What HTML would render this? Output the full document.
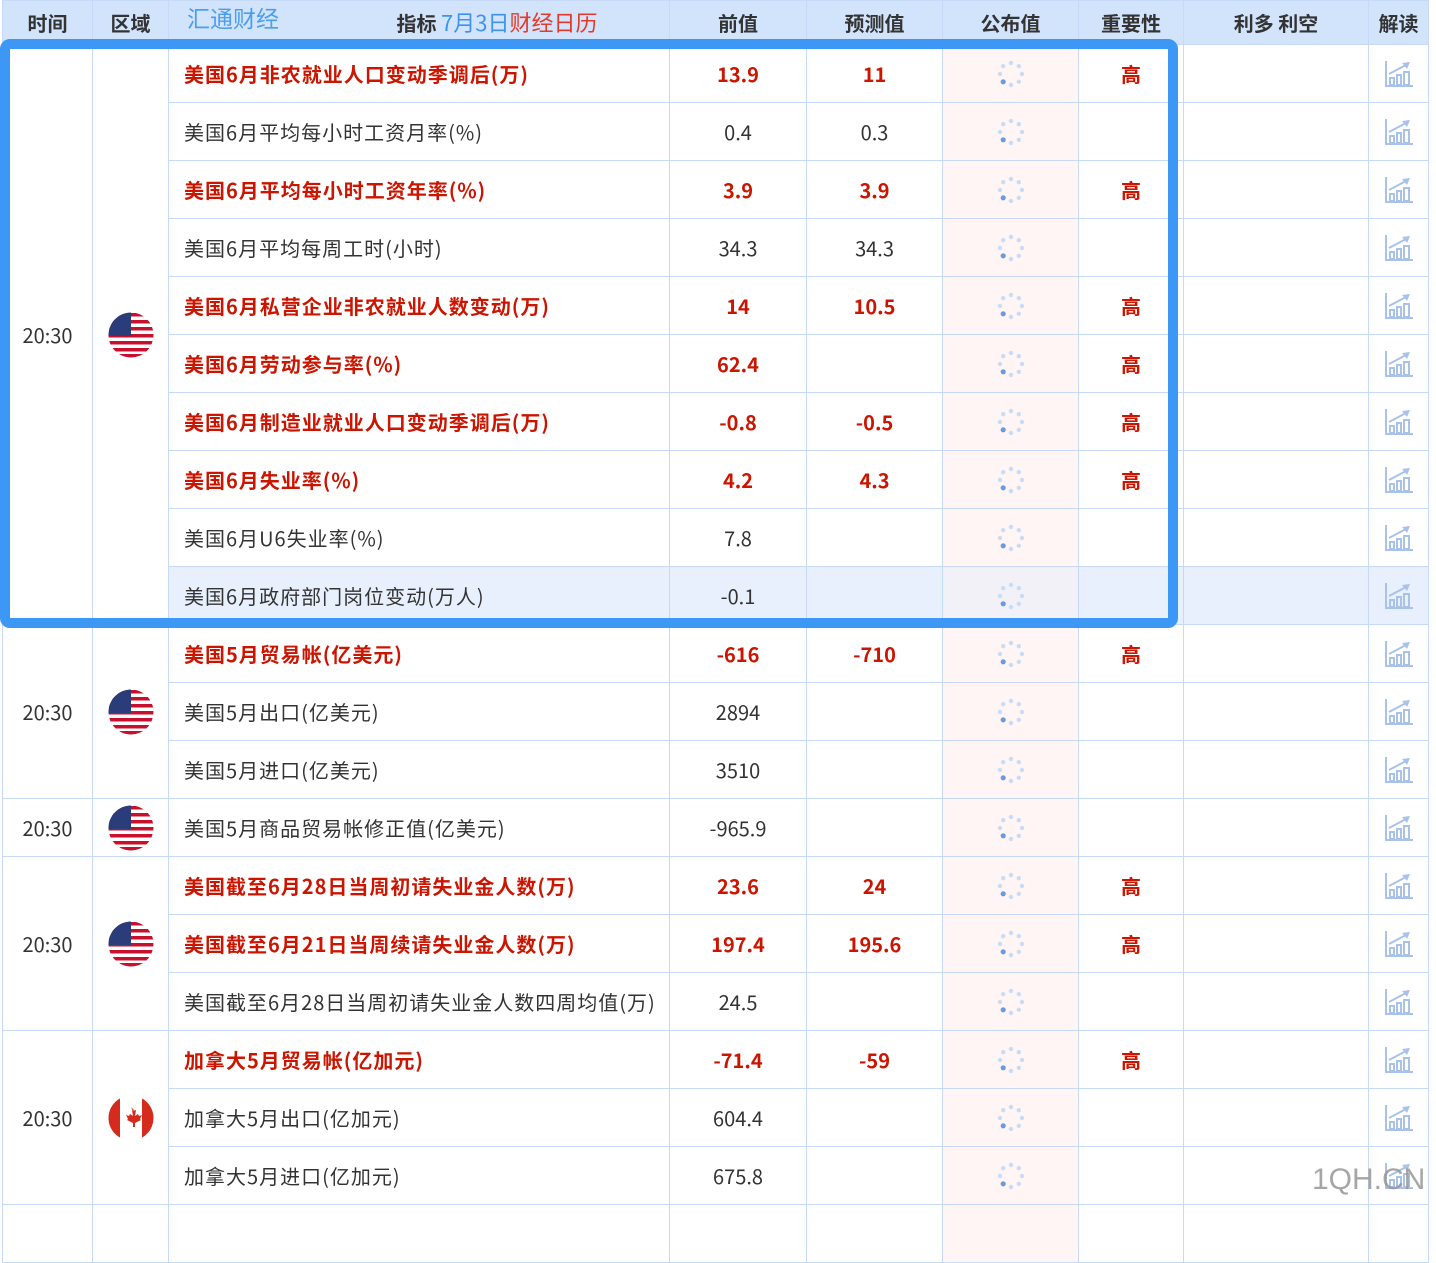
<!DOCTYPE html>
<html><head><meta charset="utf-8">
<style>
body{margin:0;background:#fff;width:1436px;height:1218px;overflow:hidden;position:relative;font-family:"Noto Sans CJK SC","Liberation Sans",sans-serif;}
table{position:absolute;left:2px;top:0;border-collapse:collapse;table-layout:fixed;width:1426px;}
td,th{border:1px solid #c6d9f6;padding:0;font-size:20px;line-height:24px;color:#333;text-align:center;}
th{height:43px;background:#d2e3fc;font-weight:bold;color:#333;}
td{height:57px;}
td svg{vertical-align:middle;}
td.n{text-align:left;padding-left:15px;letter-spacing:1px;}
.r{color:#cc1500;font-weight:bold;}
td.p{background:#fff5f5;}
tr.h td{background:#e8f0fd;}
tr.h td.p{background:#f3f1f8;}
.box{position:absolute;left:0;top:39px;width:1158px;height:569px;border:10px solid #3d97f5;border-radius:10px;}
.wm{position:absolute;left:1312px;top:1162px;font-size:30px;line-height:36px;color:rgba(150,150,150,.85);font-family:"Liberation Sans",sans-serif;}
</style></head><body>
<svg width="0" height="0" style="position:absolute">
<defs>
<symbol id="us" viewBox="0 0 46 46"><clipPath id="c"><circle cx="23" cy="23" r="22.5"/></clipPath><g clip-path="url(#c)"><rect width="46" height="46" fill="#fff"/><rect y="1" width="46" height="3.5" fill="#c8102e"/><rect y="8" width="46" height="3.5" fill="#c8102e"/><rect y="15" width="46" height="3.5" fill="#c8102e"/><rect y="22" width="46" height="3.5" fill="#c8102e"/><rect y="29" width="46" height="3.5" fill="#c8102e"/><rect y="36" width="46" height="3.5" fill="#c8102e"/><rect y="42" width="46" height="4" fill="#c8102e"/><rect width="23" height="24" fill="#2a3c7a"/></g></symbol>
<symbol id="ca" viewBox="0 0 46 46"><clipPath id="c2"><circle cx="23" cy="23" r="22.5"/></clipPath><g clip-path="url(#c2)"><rect width="46" height="46" fill="#fff"/><rect width="12" height="46" fill="#d52b1e"/><rect x="34" width="12" height="46" fill="#d52b1e"/><path d="M23 12l2 4 3-1-1 6 3-2 1 2 3-1-2 4 1 1-6 3 0 4h-2l0-4-6-3 1-1-2-4 3 1 1-2 3 2-1-6 3 1z" fill="#d52b1e"/></g></symbol>
<symbol id="sp" viewBox="0 0 30 30"><g fill="#c7dcf6"><circle cx="15" cy="4" r="2.2"/><circle cx="22.8" cy="7.2" r="2.2"/><circle cx="26" cy="15" r="2.2"/><circle cx="22.8" cy="22.8" r="2.2"/><circle cx="15" cy="26" r="2.2"/><circle cx="4" cy="15" r="2.2"/><circle cx="7.2" cy="7.2" r="2.2"/></g><circle cx="7.2" cy="22.8" r="2.6" fill="#6a9be0"/></symbol>
<symbol id="ch" viewBox="0 0 30 28"><g fill="none" stroke="#a9c2ea" stroke-width="2"><path d="M2 1v25h27"/><rect x="6" y="18" width="4" height="7"/><rect x="13" y="15" width="4" height="10"/><rect x="20" y="12" width="5" height="13"/><path d="M5 14l17-9"/></g><path d="M18 3l8-1-3 7z" fill="#a9c2ea"/></symbol>
</defs></svg>
<table>
<colgroup><col style="width:90px"><col style="width:76px"><col style="width:501px"><col style="width:137px"><col style="width:136px"><col style="width:136px"><col style="width:105px"><col style="width:185px"><col style="width:60px"></colgroup>
<tr><th>时间</th><th>区域</th><th style="position:relative"><span style="position:absolute;left:18px;top:0;font-weight:normal;color:#4a9ef0;font-size:23px;line-height:32px">汇通财经</span><span style="position:relative;left:78px">指标 <span style="font-weight:normal;color:#3d94f0;font-size:22px">7月3日</span><span style="font-weight:normal;color:#e8382a;font-size:22px">财经日历</span></span></th><th>前值</th><th>预测值</th><th>公布值</th><th>重要性</th><th>利多 利空</th><th>解读</th></tr>

<tr><td rowspan="10">20:30</td><td rowspan="10"><svg width="46" height="46"><use href="#us"/></svg></td><td class="n r">美国6月非农就业人口变动季调后(万)</td><td class="r">13.9</td><td class="r">11</td><td class="p"><svg width="30" height="30"><use href="#sp"/></svg></td><td class="r">高</td><td></td><td><svg width="30" height="28"><use href="#ch"/></svg></td></tr>
<tr><td class="n">美国6月平均每小时工资月率(%)</td><td>0.4</td><td>0.3</td><td class="p"><svg width="30" height="30"><use href="#sp"/></svg></td><td></td><td></td><td><svg width="30" height="28"><use href="#ch"/></svg></td></tr>
<tr><td class="n r">美国6月平均每小时工资年率(%)</td><td class="r">3.9</td><td class="r">3.9</td><td class="p"><svg width="30" height="30"><use href="#sp"/></svg></td><td class="r">高</td><td></td><td><svg width="30" height="28"><use href="#ch"/></svg></td></tr>
<tr><td class="n">美国6月平均每周工时(小时)</td><td>34.3</td><td>34.3</td><td class="p"><svg width="30" height="30"><use href="#sp"/></svg></td><td></td><td></td><td><svg width="30" height="28"><use href="#ch"/></svg></td></tr>
<tr><td class="n r">美国6月私营企业非农就业人数变动(万)</td><td class="r">14</td><td class="r">10.5</td><td class="p"><svg width="30" height="30"><use href="#sp"/></svg></td><td class="r">高</td><td></td><td><svg width="30" height="28"><use href="#ch"/></svg></td></tr>
<tr><td class="n r">美国6月劳动参与率(%)</td><td class="r">62.4</td><td></td><td class="p"><svg width="30" height="30"><use href="#sp"/></svg></td><td class="r">高</td><td></td><td><svg width="30" height="28"><use href="#ch"/></svg></td></tr>
<tr><td class="n r">美国6月制造业就业人口变动季调后(万)</td><td class="r">-0.8</td><td class="r">-0.5</td><td class="p"><svg width="30" height="30"><use href="#sp"/></svg></td><td class="r">高</td><td></td><td><svg width="30" height="28"><use href="#ch"/></svg></td></tr>
<tr><td class="n r">美国6月失业率(%)</td><td class="r">4.2</td><td class="r">4.3</td><td class="p"><svg width="30" height="30"><use href="#sp"/></svg></td><td class="r">高</td><td></td><td><svg width="30" height="28"><use href="#ch"/></svg></td></tr>
<tr><td class="n">美国6月U6失业率(%)</td><td>7.8</td><td></td><td class="p"><svg width="30" height="30"><use href="#sp"/></svg></td><td></td><td></td><td><svg width="30" height="28"><use href="#ch"/></svg></td></tr>
<tr class="h"><td class="n">美国6月政府部门岗位变动(万人)</td><td>-0.1</td><td></td><td class="p"><svg width="30" height="30"><use href="#sp"/></svg></td><td></td><td></td><td><svg width="30" height="28"><use href="#ch"/></svg></td></tr>

<tr><td rowspan="3">20:30</td><td rowspan="3"><svg width="46" height="46"><use href="#us"/></svg></td><td class="n r">美国5月贸易帐(亿美元)</td><td class="r">-616</td><td class="r">-710</td><td class="p"><svg width="30" height="30"><use href="#sp"/></svg></td><td class="r">高</td><td></td><td><svg width="30" height="28"><use href="#ch"/></svg></td></tr>
<tr><td class="n">美国5月出口(亿美元)</td><td>2894</td><td></td><td class="p"><svg width="30" height="30"><use href="#sp"/></svg></td><td></td><td></td><td><svg width="30" height="28"><use href="#ch"/></svg></td></tr>
<tr><td class="n">美国5月进口(亿美元)</td><td>3510</td><td></td><td class="p"><svg width="30" height="30"><use href="#sp"/></svg></td><td></td><td></td><td><svg width="30" height="28"><use href="#ch"/></svg></td></tr>

<tr><td>20:30</td><td><svg width="46" height="46"><use href="#us"/></svg></td><td class="n">美国5月商品贸易帐修正值(亿美元)</td><td>-965.9</td><td></td><td class="p"><svg width="30" height="30"><use href="#sp"/></svg></td><td></td><td></td><td><svg width="30" height="28"><use href="#ch"/></svg></td></tr>

<tr><td rowspan="3">20:30</td><td rowspan="3"><svg width="46" height="46"><use href="#us"/></svg></td><td class="n r">美国截至6月28日当周初请失业金人数(万)</td><td class="r">23.6</td><td class="r">24</td><td class="p"><svg width="30" height="30"><use href="#sp"/></svg></td><td class="r">高</td><td></td><td><svg width="30" height="28"><use href="#ch"/></svg></td></tr>
<tr><td class="n r">美国截至6月21日当周续请失业金人数(万)</td><td class="r">197.4</td><td class="r">195.6</td><td class="p"><svg width="30" height="30"><use href="#sp"/></svg></td><td class="r">高</td><td></td><td><svg width="30" height="28"><use href="#ch"/></svg></td></tr>
<tr><td class="n">美国截至6月28日当周初请失业金人数四周均值(万)</td><td>24.5</td><td></td><td class="p"><svg width="30" height="30"><use href="#sp"/></svg></td><td></td><td></td><td><svg width="30" height="28"><use href="#ch"/></svg></td></tr>

<tr><td rowspan="3">20:30</td><td rowspan="3"><svg width="46" height="46"><use href="#ca"/></svg></td><td class="n r">加拿大5月贸易帐(亿加元)</td><td class="r">-71.4</td><td class="r">-59</td><td class="p"><svg width="30" height="30"><use href="#sp"/></svg></td><td class="r">高</td><td></td><td><svg width="30" height="28"><use href="#ch"/></svg></td></tr>
<tr><td class="n">加拿大5月出口(亿加元)</td><td>604.4</td><td></td><td class="p"><svg width="30" height="30"><use href="#sp"/></svg></td><td></td><td></td><td><svg width="30" height="28"><use href="#ch"/></svg></td></tr>
<tr><td class="n">加拿大5月进口(亿加元)</td><td>675.8</td><td></td><td class="p"><svg width="30" height="30"><use href="#sp"/></svg></td><td></td><td></td><td><svg width="30" height="28"><use href="#ch"/></svg></td></tr>
<tr><td></td><td></td><td></td><td></td><td></td><td class="p"></td><td></td><td></td><td></td></tr>
</table>
<div class="box"></div>
<div class="wm">1QH.CN</div>
</body></html>
